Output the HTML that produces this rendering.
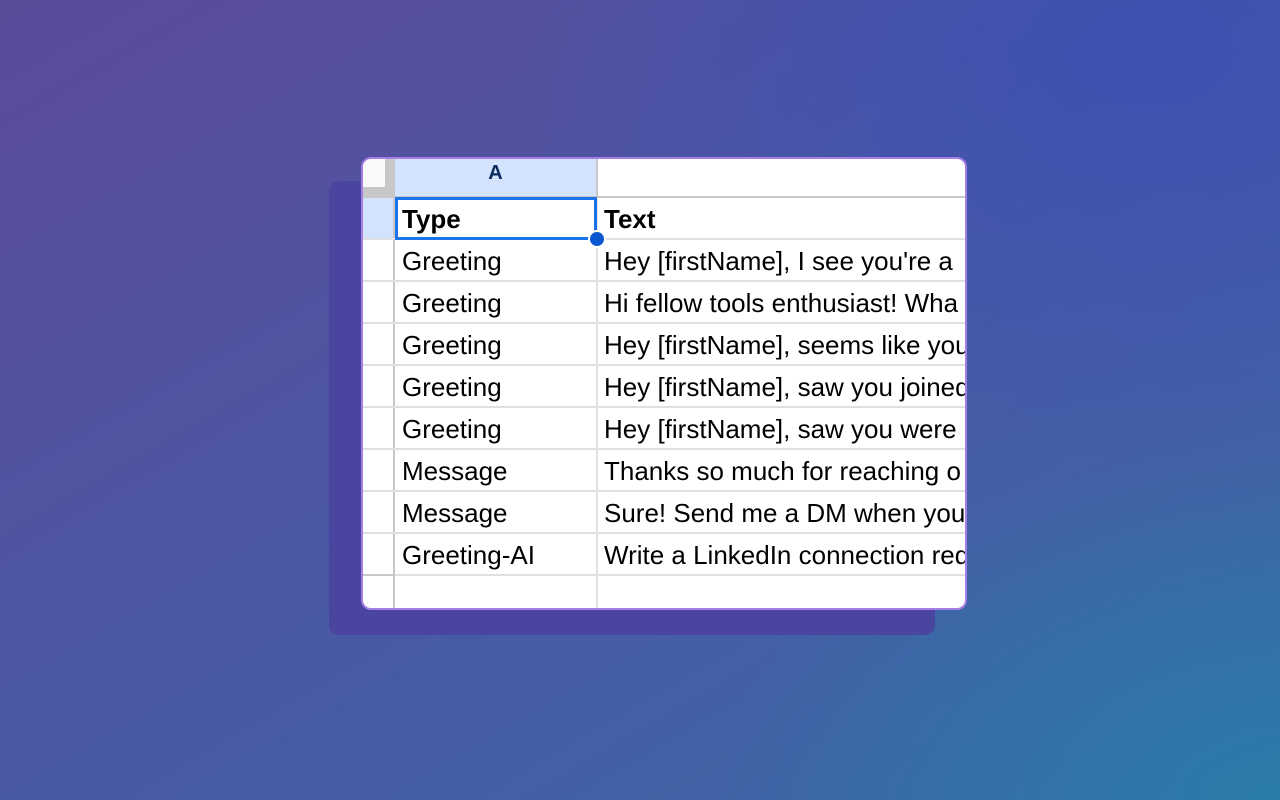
<!DOCTYPE html>
<html><head><style>
html,body{margin:0;padding:0}
body{width:1280px;height:800px;position:relative;overflow:hidden;
background:
radial-gradient(ellipse 900px 600px at 1150px 50px, rgba(58,80,180,0.8), rgba(58,80,180,0) 70%),
radial-gradient(ellipse 800px 500px at 1280px 800px, rgba(40,125,170,0.9), rgba(40,125,170,0) 70%),
linear-gradient(150deg,#5b4b9b 0%,#4a58a4 50%,#3a6aa8 100%);
font-family:"Liberation Sans",Arial,sans-serif;}
.shadow{position:absolute;left:329px;top:181px;width:606px;height:454px;background:#4a46a0;border-radius:10px}
.card{position:absolute;left:361px;top:157px;width:602px;height:449px;border:2px solid #a57ee6;border-radius:10px;background:#fff;overflow:hidden}
.c{position:absolute;box-sizing:border-box}
.t{position:absolute;font-size:26px;color:#000;white-space:nowrap}
.h{position:absolute;left:0;width:602px;height:2px;background:#e0e0e0}
</style></head><body>
<div class="shadow"></div>
<div class="card">
 <div class="c" style="left:0;top:0;width:32px;height:39px;background:#c7c7c7"></div>
 <div class="c" style="left:0;top:0;width:22px;height:28px;background:#f8f9fa"></div>
 <div class="c" style="left:32px;top:0;width:201px;height:37px;background:#d3e3fd"></div>
 <div class="t" style="left:32px;width:201px;text-align:center;top:3px;font-size:20px;font-weight:bold;color:#0b2a5c">A</div>
 <div class="c" style="left:233px;top:0;width:2px;height:449px;background:#e0e0e0"></div>
 <div class="c" style="left:233px;top:0;width:2px;height:37px;background:#c7c7c7"></div>
 <div class="c" style="left:0;top:37px;width:602px;height:2px;background:#c7c7c7"></div>
 <div class="c" style="left:0;top:39px;width:30px;height:40px;background:#d3e3fd"></div>
 <div class="c" style="left:30px;top:39px;width:2px;height:410px;background:#c7c7c7"></div>
 <div class="h" style="top:79px"></div><div class="h" style="top:121px"></div><div class="h" style="top:163px"></div>
 <div class="h" style="top:205px"></div><div class="h" style="top:247px"></div><div class="h" style="top:289px"></div>
 <div class="h" style="top:331px"></div><div class="h" style="top:373px"></div><div class="h" style="top:415px"></div>
 <div class="c" style="left:0;top:415px;width:32px;height:2px;background:#c7c7c7"></div>
 <div class="c" style="left:32px;top:38px;width:202px;height:43px;border:3px solid #1a73e8"></div>
 <div class="c" style="left:225px;top:71px;width:18px;height:18px;border-radius:50%;background:#0b57d0;border:2px solid #fff"></div>
 <div class="t" style="left:39px;top:45px;font-weight:bold">Type</div>
 <div class="t" style="left:241px;top:45px;font-weight:bold">Text</div>
 <div class="t" style="left:39px;top:87px">Greeting</div><div class="t" style="left:241px;top:87px">Hey [firstName], I see you're a</div>
 <div class="t" style="left:39px;top:129px">Greeting</div><div class="t" style="left:241px;top:129px">Hi fellow tools enthusiast! Wha</div>
 <div class="t" style="left:39px;top:171px">Greeting</div><div class="t" style="left:241px;top:171px">Hey [firstName], seems like you</div>
 <div class="t" style="left:39px;top:213px">Greeting</div><div class="t" style="left:241px;top:213px">Hey [firstName], saw you joined</div>
 <div class="t" style="left:39px;top:255px">Greeting</div><div class="t" style="left:241px;top:255px">Hey [firstName], saw you were</div>
 <div class="t" style="left:39px;top:297px">Message</div><div class="t" style="left:241px;top:297px">Thanks so much for reaching o</div>
 <div class="t" style="left:39px;top:339px">Message</div><div class="t" style="left:241px;top:339px">Sure! Send me a DM when you</div>
 <div class="t" style="left:39px;top:381px">Greeting-AI</div><div class="t" style="left:241px;top:381px">Write a LinkedIn connection req</div>
</div>
</body></html>
